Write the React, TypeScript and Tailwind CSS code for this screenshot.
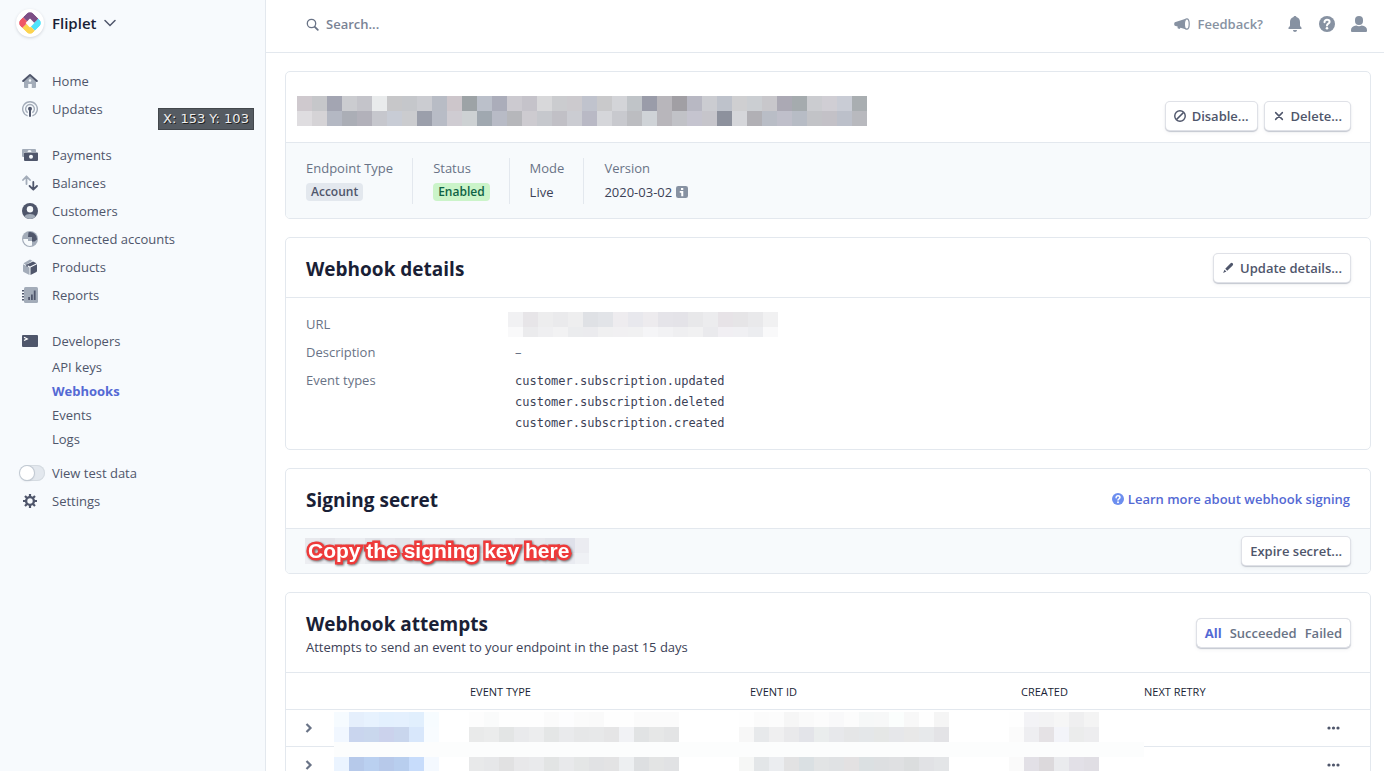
import React from "react";

const DARK = "#4f566b";
const LIGHT = "#a3acb9";

type Run = { at: number; colors: string };

/* A block of coloured squares that hides the text under it. */
function Mosaic({ rows, width, height, className = "" }: { rows: Run[][]; width: number; height: number; className?: string }) {
  return (
    <svg width={width} height={height} className={className} shapeRendering="crispEdges" aria-hidden="true">
      {rows.map((runs, r) =>
        runs.map((run) =>
          run.colors.split(" ").map((c, i) => (
            <rect key={`${r}-${run.at}-${i}`} x={(run.at + i) * 15} y={r * 15} width={15} height={15} fill={`#${c}`} />
          )),
        ),
      )}
    </svg>
  );
}

const titleRows: Run[][] = [
  [{ at: 0, colors: "cfc9ce c6c7ca a3a5b2 cbccd0 c4c4ca e9ebec c7c7c9 c5c7cb cbccd1 b8bcc5 cdc6cb 9da3a6 bbc0ca abadba cccad0 c5c3ca d8d8da cbcccf cccace c0c3cd c9c9cb d3d4d8 c0c4c8 9a9ca9 b8b6bb a19fa4 b8b8c3 cbccd1 bec2cb cfcfd1 cbced2 c8c7cb aba9b4 a5abae cbccd0 d0ced4 c9ccd5 a9aeb1" }],
  [{ at: 0, colors: "dfdde0 d5d3d6 b4b8c3 abaeb6 b2b1ba c6c7cd c8ccd5 cbcccf 9b9fab b8bcc6 cfccd2 cdd1d3 a0a8b0 b8bbc6 b6b7bb cdcbd0 c6c8cd c1c0c6 cbccd2 b9b9c5 d5d6da c8c9ce bcbdc1 cfd3d7 b8b6bb c1c2c7 c5c4cf c6c5cb 8d919d d5d6da b1b0b5 b9bdc6 bfbfca b7bcc5 c2c3c7 c3c1c7 bcc0ca b8b9be" }],
];
const urlRows: Run[][] = [
  [{ at: 0, colors: "f1f1f3 e7e5e8 ededee eaeaec eeeeef dfe1e5 e2e4e8 eeecef e8e8ed edebee e5e4e9 e4e3e8 e8e8ea ececee e7e3e7 e6e5e7 e9e9eb f1f1f2" }],
  [{ at: 0, colors: "f9f9fa ebebed efeff1 f2f2f3 ebecee ebebee f0f0f1 f1f0f2 f1f1f2 f5f5f7 f2f2f4 efeff1 f1f1f2 eaeaed f1eff3 f0f0f3 ecedf0 f9f9fa" }],
];
const secretRows: Run[][] = [
  [{ at: 0, colors: "e8e9ed e3e4e9 e8eaee ebedf1 e2e4e9 e6e7ec e3e4e9 e7e8ed e9eaee e4e5ea e6e8ec e3e4e9 e5e6eb e8e9ee e3e4ea e6e7ec e2e4ea dfe1ea ebecf1" }],
  [{ at: 0, colors: "edeef2 e9eaef ebecf0 edeff2 e8eaee eaebef eceef1 e9eaee ebedf0 edeef1 e9ebee ebecf0 edeff2 eaebef eceef2 edeff3 e9ebef e9ebf1 eff1f5" }],
];
const attemptRows: Run[][] = [
  [
    { at: 0, colors: "f6fbff e5effc e7f2fe e3f0fe e4f0fe e1effd f7fcff" },
    { at: 9, colors: "fdfdfd fafbfb fefefe fefefe fefefe fbfbfb fdfdfe fbfbfb fafafa fefefe fefefe fbfbfb fbfbfb fbfbfb" },
    { at: 27, colors: "fefefe fbfbfb fcfcfc f6f6f6 fafafa fcfcfc f9f9fa fcfcfc f6f8f8 f7f8f8 fbfefd f8f8f8 fefefe f5f5f5" },
    { at: 45, colors: "fefefe f3f3f6 f3f3f4 f6f6f6 efeff0 f4f4f4" },
  ],
  [
    { at: 0, colors: "f1f7ff c9d5ee c9d7ed cbd2ec c9d6ed d8e7fb f8fcff" },
    { at: 9, colors: "e9eaea ebecec e3e5e5 e9eaec ecedee e4e6e6 e9eaec e6e7e8 e7e8e9 e5e5e6 f1f2f5 e1e3e4 e6e7e7 e3e4e5" },
    { at: 27, colors: "f7f7f7 e7e9eb efeff0 e9e9eb e3e4e9 eaeded e7e8eb e5e6e7 e4e7e9 e5e7e6 e6e7ea e8e8e8 e7e9eb e3e3e6" },
    { at: 45, colors: "fbfbfb eeeef1 e5e2e5 f3f4f9 ebecec ededef" },
  ],
  [{ at: 0, colors: Array(54).fill("fcfdfd").join(" ") }],
  [
    { at: 0, colors: "ebf4ff b6c9ea bad0f0 b7c9ea b8ceee c7dcfb f4f9ff" },
    { at: 9, colors: "e8e9ea e6e7e9 e1e1e2 e8e8ea e9eaec e2e4e4 e8e9eb e4e6e6 e1e2e4 e3e3e4 edeff1 dddfe1 e3e4e4 e1e2e4" },
    { at: 27, colors: "f6f7f6 e3e6e8 ebedf0 e2e2e3 dae0e3 e2e4e5 e0e2e4 e3e1e2 dbe0e2 dddfe1 dfe0e2 dbddde e1e2e5 e3e5e7" },
    { at: 45, colors: "fafafa e2e0e6 dcd9dc eaebee e2e0e7 e0dee4" },
  ],
];

function Icon({ children, size = 16 }: { children: React.ReactNode; size?: number }) {
  return (
    <svg width={size} height={size} viewBox="0 0 16 16" className="shrink-0" aria-hidden="true">
      {children}
    </svg>
  );
}

const icons = {
  home: (
    <Icon>
      <path fill={LIGHT} fillRule="evenodd" d="M8 3.200l6 5V14a1 1 0 0 1-1 1H9.800v-4H6.200v4H3a1 1 0 0 1-1-1V8.200zM8 6.200a1.300 1.300 0 1 0 0 2.600 1.300 1.300 0 0 0 0-2.600z" />
      <path fill="none" stroke={DARK} strokeWidth="2" strokeLinecap="round" strokeLinejoin="round" d="M1.200 8L8 2l6.800 6" />
    </Icon>
  ),
  updates: (
    <Icon>
      <g fill="none" stroke={LIGHT} strokeWidth="1.400">
        <path d="M5.600 14.900a7.300 7.300 0 1 1 4.800 0" />
        <path d="M5.700 11.700a4.400 4.400 0 1 1 4.600 0" />
      </g>
      <circle cx="8" cy="7.700" r="2" fill={DARK} />
      <path stroke={DARK} strokeWidth="2" strokeLinecap="round" d="M8 8v7" />
    </Icon>
  ),
  payments: (
    <Icon>
      <path fill={LIGHT} d="M1 2h12a1 1 0 0 1 1 1v2H9.500a2 2 0 0 0-4 0H3a1 1 0 0 0-1 1v4H1a1 1 0 0 1-1-1V3a1 1 0 0 1 1-1z" />
      <path fill={DARK} fillRule="evenodd" d="M3 5.500h12a1 1 0 0 1 1 1V13a1 1 0 0 1-1 1H3a1 1 0 0 1-1-1V6.500a1 1 0 0 1 1-1zm6 2.200a2 2 0 1 0 0 4 2 2 0 0 0 0-4z" />
    </Icon>
  ),
  balances: (
    <Icon>
      <g fill="none" strokeWidth="1.800" strokeLinecap="round" strokeLinejoin="round">
        <path stroke={LIGHT} d="M4.500 9V1.500M1 5l3.500-3.700L8 5" />
        <path stroke={DARK} d="M11.300 7v7.500M7.600 11l3.700 3.700L15 11" />
      </g>
    </Icon>
  ),
  customers: (
    <Icon>
      <circle cx="8" cy="8" r="8" fill={DARK} />
      <circle cx="8" cy="6.300" r="3.200" fill="#f7fafc" />
      <path fill={LIGHT} d="M2.200 13.500C3.500 11.800 5.600 11 8 11s4.500.8 5.800 2.500A8 8 0 0 1 8 16a8 8 0 0 1-5.800-2.500z" />
    </Icon>
  ),
  connected: (
    <Icon>
      <circle cx="8" cy="8" r="8" fill={LIGHT} />
      <path fill={DARK} d="M6.500 1.200A7 7 0 0 1 15 8.500L12.500 10.500H10V6H6z" />
      <path fill="#f7fafc" d="M1.200 8H6v2h4v4.500C6 16 1.500 13 1.200 8z" />
    </Icon>
  ),
  products: (
    <Icon>
      <path fill={LIGHT} d="M7.500 16L1.600 13a1 1 0 0 1-.6-.9V5.200l6.500 3.200z" />
      <path fill={LIGHT} d="M1.500 4.200L8 .6l2.500 1.200-6 3.600v1.200z" />
      <path fill={DARK} d="M8.500 16l5.900-3a1 1 0 0 0 .6-.9V5.200L8.500 8.400z" />
      <path fill={DARK} d="M5.400 5.200l5.600-2.700L14.500 4.200 8 7.400 5.800 6.300V8L4.200 7.200V5.600z" />
    </Icon>
  ),
  reports: (
    <Icon>
      <rect x="2" width="14" height="16" rx="1.500" fill={LIGHT} />
      <path fill={DARK} d="M6.200 10h1.800v3H6.200zM9 7.500h1.800V13H9zM11.800 3.500h1.800V13h-1.800zM0 3h2v1.600H0zM0 6h2v1.600H0zM0 9h2v1.600H0zM0 12h2v1.600H0z" />
    </Icon>
  ),
  developers: (
    <Icon>
      <rect y="2" width="16" height="12" rx="1" fill={DARK} />
      <path fill="none" stroke="#fff" strokeWidth="1.200" d="M2 4.300l3.300 1.600L2 7.500" />
    </Icon>
  ),
  settings: (
    <Icon>
      <circle cx="8" cy="8" r="3.900" fill="none" stroke={DARK} strokeWidth="2.400" />
      <g stroke={DARK} strokeWidth="2.200">
        <path d="M8 1v3M8 12v3M1 8h3M12 8h3M3 3l2 2M11 11l2 2M13 3l-2 2M5 11l-2 2" />
      </g>
    </Icon>
  ),
};

function NavItem({ icon, label }: { icon: React.ReactNode; label: string }) {
  return (
    <a href="#" className="flex h-7 items-center gap-3.5 pl-[22px]">
      {icon}
      <span>{label}</span>
    </a>
  );
}

function Question({ size, fill }: { size: number; fill: string }) {
  return (
    <Icon size={size}>
      <circle cx="8" cy="8" r="8" fill={fill} />
      <path fill="none" stroke="#fff" strokeWidth="2" strokeLinecap="round" strokeLinejoin="round" d="M5.500 6.200C5.500 4.600 6.600 3.800 8 3.800s2.600.8 2.600 2.200C10.600 7.700 8 7.700 8 9.400" />
      <circle cx="8" cy="12.300" r="1.300" fill="#fff" />
    </Icon>
  );
}

function Button({ children, icon }: { children: React.ReactNode; icon?: React.ReactNode }) {
  return (
    <button className="flex h-7 items-center gap-1.5 rounded bg-white px-2 font-semibold whitespace-nowrap text-[#4f566b] shadow-[0_0_0_1px_#dfe1e7,0_1px_1px_1px_#c4c8d0,0_2px_5px_#3c425714]">
      {icon}
      {children}
    </button>
  );
}

function Card({ children }: { children: React.ReactNode }) {
  return <section className="overflow-hidden rounded-[5px] border border-[#e3e8ee] bg-white">{children}</section>;
}

function CardHeader({ title, children }: { title: string; children: React.ReactNode }) {
  return (
    <div className="flex h-[60px] items-center justify-between border-b border-[#e3e8ee] px-5">
      <h2 className="pt-0.5 text-[19px] leading-7 font-bold text-[#1a1f36]">{title}</h2>
      {children}
    </div>
  );
}

function Fact({ label, children, last }: { label: string; children: React.ReactNode; last?: boolean }) {
  return (
    <div className={last ? "flex flex-col" : "mr-5 flex flex-col border-r border-[#e3e8ee] pr-[19px]"}>
      <dt className="h-[22px] leading-5 text-[#697386]">{label}</dt>
      <dd className="flex h-6 items-center gap-1 text-[#3c4257]">{children}</dd>
    </div>
  );
}

function AttemptRow() {
  return (
    <tr className="h-[37px] border-b border-[#e3e8ee]">
      <td className="pl-[18px]">
        <button aria-label="Expand" className="flex">
          <svg width="10" height="12" viewBox="0 0 10 12" aria-hidden="true">
            <path d="M2.500 2l4 4-4 4" fill="none" stroke="#697386" strokeWidth="2.200" />
          </svg>
        </button>
      </td>
      <td /><td /><td /><td /><td />
      <td>
        <button aria-label="More" className="ml-auto mr-[30px] flex">
          <svg width="13" height="4" viewBox="0 0 13 4" fill="#4f566b" aria-hidden="true">
            <circle cx="2" cy="2" r="1.600" />
            <circle cx="6.500" cy="2" r="1.600" />
            <circle cx="11" cy="2" r="1.600" />
          </svg>
        </button>
      </td>
    </tr>
  );
}

export default function App() {
  return (
    <div className="flex h-screen overflow-hidden bg-white font-['Open_Sans','Noto_Sans',sans-serif] text-[13px] leading-5 text-[#3c4257]">
      <aside className="relative w-[266px] shrink-0 border-r border-[#e3e8ee] bg-[#f7fafd] text-[#4f566b]">
        <button className="mt-[9px] ml-4 flex h-7 items-center gap-2 text-[#1a1f36]">
          <span className="flex size-7 items-center justify-center rounded-full bg-white shadow-[0_1px_3px_#3c425733]">
            <svg width="24" height="24" viewBox="-12 -12 24 24" aria-hidden="true">
              <defs>
                <clipPath id="mark"><rect x="-9" y="-9" width="18" height="18" rx="4.500" /></clipPath>
              </defs>
              <g transform="rotate(45)">
                <g clipPath="url(#mark)">
                  <path fill="#7d4f86" d="M-9-9H3V0H0V1H-9z" />
                  <path fill="#4fe3fb" d="M3-9H9V2H0V0H3z" />
                  <path fill="#fcd34f" d="M9 2V9H-2V2z" />
                  <path fill="#ef5666" d="M-9 1H0V3H-2V9H-9z" />
                </g>
                <rect x="-3.200" y="-3.200" width="6.400" height="6.400" rx=".5" fill="#fff" />
              </g>
            </svg>
          </span>
          <span className="text-[15px] font-semibold">Fliplet</span>
          <svg width="12" height="8" viewBox="0 0 12 8" aria-hidden="true">
            <path d="M1 1.500l5 5 5-5" fill="none" stroke="#4f566b" strokeWidth="1.500" strokeLinecap="round" />
          </svg>
        </button>

        <nav className="mt-[30px]">
          <NavItem icon={icons.home} label="Home" />
          <NavItem icon={icons.updates} label="Updates" />
          <div className="mt-[18px]">
            <NavItem icon={icons.payments} label="Payments" />
            <NavItem icon={icons.balances} label="Balances" />
            <NavItem icon={icons.customers} label="Customers" />
            <NavItem icon={icons.connected} label="Connected accounts" />
            <NavItem icon={icons.products} label="Products" />
            <NavItem icon={icons.reports} label="Reports" />
          </div>
          <div className="mt-[18px]">
            <NavItem icon={icons.developers} label="Developers" />
            <div className="flex flex-col pl-[52px] leading-6">
              <a href="#">API keys</a>
              <a href="#" className="font-bold text-[#5469d4]">Webhooks</a>
              <a href="#">Events</a>
              <a href="#">Logs</a>
            </div>
          </div>
          <label className="mt-2 flex h-7 items-center gap-[7px] pl-5">
            <input type="checkbox" role="switch" className="peer sr-only" />
            <span className="flex h-4 w-[25px] items-center rounded-full bg-[#e3e8ee] shadow-[inset_0_0_0_1px_#d5dbe1]">
              <span className="size-3.5 rounded-full bg-white shadow-[0_0_0_1px_#c1c9d2,0_1px_2px_#3c425740]" />
            </span>
            View test data
          </label>
          <NavItem icon={icons.settings} label="Settings" />
        </nav>

        <div className="absolute top-[108px] left-[158px] flex h-[22px] items-center border border-[#43474c] bg-[#555b62] px-1 font-['DejaVu_Sans',sans-serif] text-[13px] whitespace-nowrap text-[#eeeeee] [text-shadow:1px_1px_0_#222]">
          X: 153 Y: 103
        </div>
      </aside>

      <div className="flex min-w-0 flex-1 flex-col">
        <header className="flex h-[53px] shrink-0 items-center justify-between border-b border-[#e3e8ee] pr-[17px] pb-1 pl-10">
          <label className="flex items-center gap-[7px]">
            <svg width="13" height="13" viewBox="0 0 13 13" aria-hidden="true">
              <circle cx="5.500" cy="5.500" r="4.200" fill="none" stroke="#697386" strokeWidth="1.300" />
              <path d="M8.800 8.800l3 3" stroke="#697386" strokeWidth="1.800" strokeLinecap="round" />
            </svg>
            <input type="text" aria-label="Search" placeholder="Search..." className="w-64 font-semibold outline-none placeholder:text-[#7a8395]" />
          </label>
          <div className="flex items-center gap-4 text-[#8792a2]">
            <a href="#" className="mr-2 flex items-center gap-2 font-semibold">
              <svg width="16" height="12" viewBox="0 0 16 12" aria-hidden="true">
                <path d="M.8 4.300L12.500.4v11.200L6.500 9.800 5.500 11 3.600 10.300V8.600L.8 7.700C0 7.300 0 4.700.8 4.300z" fill="#8792a2" />
                <ellipse cx="12.800" cy="6" rx="2.400" ry="5.200" fill="#fff" stroke="#8792a2" strokeWidth="1.200" />
              </svg>
              Feedback?
            </a>
            <button aria-label="Notifications">
              <Icon>
                <path fill="#8792a2" d="M8 0c.8 0 1.300.4 1.400 1C11.700 1.700 13 3.600 13 6v3.500c0 1 1.500 1.500 1.500 2.500v1h-13v-1c0-1 1.500-1.500 1.500-2.500V6c0-2.400 1.300-4.300 3.600-5C6.700.4 7.200 0 8 0zM6 14h4c0 1.200-.9 2-2 2s-2-.8-2-2z" />
              </Icon>
            </button>
            <button aria-label="Help"><Question size={16} fill="#8792a2" /></button>
            <button aria-label="Profile">
              <Icon>
                <rect x="4" width="8" height="9" rx="4" fill="#8792a2" />
                <path fill="#8792a2" d="M5.300 9.500C6.900 10.500 9.100 10.500 10.700 9.500 14 10 16 11.500 16 14v1a1 1 0 0 1-1 1H1a1 1 0 0 1-1-1v-1c0-2.500 2-4 5.300-4.500z" />
              </Icon>
            </button>
          </div>
        </header>

        <main className="flex flex-col gap-[18px] pt-[18px] pr-[13px] pl-[19px]">
          <Card>
            <div className="flex h-[71px] items-center justify-between border-b border-[#e3e8ee] pr-5 pl-[11px]">
              <Mosaic rows={titleRows} width={570} height={30} className="mt-2" />
              <div className="mt-[18px] flex gap-2">
                <Button icon={
                  <Icon size={12}>
                    <circle cx="8" cy="8" r="7" fill="none" stroke={DARK} strokeWidth="1.900" />
                    <path d="M3.500 12.500l9-9" stroke={DARK} strokeWidth="1.900" />
                  </Icon>
                }>Disable...</Button>
                <Button icon={
                  <Icon size={12}>
                    <path d="M3.500 3.500l9 9M12.500 3.500l-9 9" stroke={DARK} strokeWidth="2" strokeLinecap="round" />
                  </Icon>
                }>Delete...</Button>
              </div>
            </div>
            <dl className="flex bg-[#f7fafc] pt-[15px] pb-3.5 pl-5">
              <Fact label="Endpoint Type">
                <span className="rounded bg-[#e3e8ee] px-[5px] text-[12px] leading-[18px] font-semibold text-[#4f566b]">Account</span>
              </Fact>
              <Fact label="Status">
                <span className="rounded bg-[#cbf4c9] px-[5px] text-[12px] leading-[18px] font-semibold text-[#0e6245]">Enabled</span>
              </Fact>
              <Fact label="Mode">Live</Fact>
              <Fact label="Version" last>
                2020-03-02
                <Icon size={12}>
                  <rect width="16" height="16" rx="3" fill="#8792a2" />
                  <path fill="#fff" d="M6.700 2.500h3v2.700h-3zM5 6.700h4.700V13.500H7V9H5z" />
                </Icon>
              </Fact>
            </dl>
          </Card>

          <Card>
            <CardHeader title="Webhook details">
              <Button icon={
                <Icon size={12}>
                  <path fill={DARK} d="M11.500 1.800a1.800 1.800 0 0 1 2.700 2.700L7 11.700 4.300 9zM3.300 10.200L5.800 12.700 1.500 14.500z" />
                </Icon>
              }>Update details...</Button>
            </CardHeader>
            <dl className="grid grid-cols-[202px_1fr] pt-3 pb-[15px] pl-5 leading-7 text-[#697386]">
              <dt>URL</dt>
              <dd className="flex h-7 pt-0.5"><Mosaic rows={urlRows} width={270} height={25} /></dd>
              <dt>Description</dt>
              <dd className="pl-[7px]">–</dd>
              <dt>Event types</dt>
              <dd className="pt-[5px] pl-[7px] font-['DejaVu_Sans_Mono',monospace] text-[12px] leading-[21px] text-[#3c4257]">
                <div>customer.subscription.updated</div>
                <div>customer.subscription.deleted</div>
                <div>customer.subscription.created</div>
              </dd>
            </dl>
          </Card>

          <Card>
            <CardHeader title="Signing secret">
              <a href="#" className="flex items-center gap-1 font-semibold text-[#5469d4]">
                <Question size={12} fill="#6c8eef" />
                Learn more about webhook signing
              </a>
            </CardHeader>
            <div className="flex h-11 items-center justify-between bg-[#f7fafc] pr-5 pl-[19px]">
              <div className="relative">
                <Mosaic rows={secretRows} width={284} height={26} />
                <span className="absolute top-0 left-[3px] font-['Liberation_Sans',sans-serif] text-[21px] leading-[26px] font-bold whitespace-nowrap text-white [-webkit-text-stroke:5px_#ee3a3a] [paint-order:stroke_fill] drop-shadow-[1px_1px_1px_#0008]">
                  Copy the signing key here
                </span>
              </div>
              <Button>Expire secret...</Button>
            </div>
          </Card>

          <Card>
            <div className="flex h-20 items-center justify-between border-b border-[#e3e8ee] px-5">
              <div className="pt-0.5">
                <h2 className="text-[19px] leading-[26px] font-bold text-[#1a1f36]">Webhook attempts</h2>
                <p>Attempts to send an event to your endpoint in the past 15 days</p>
              </div>
              <div className="flex h-7 items-center gap-2 rounded px-2 font-semibold text-[#697386] shadow-[0_0_0_1px_#dfe1e7,0_1px_1px_1px_#c4c8d0,0_2px_5px_#3c425714]">
                <button className="font-bold text-[#5469d4]">All</button>
                <button>Succeeded</button>
                <button>Failed</button>
              </div>
            </div>
            <div className="relative">
              <table className="w-full table-fixed border-collapse text-left">
                <thead>
                  <tr className="h-9 border-b border-[#e3e8ee] text-[11px] text-[#1a1f36] [&>th]:pt-0.5 [&>th]:font-normal">
                    <th className="w-12" />
                    <th className="w-[136px]" />
                    <th className="w-[280px]">EVENT TYPE</th>
                    <th className="w-[271px]">EVENT ID</th>
                    <th className="w-[123px]">CREATED</th>
                    <th className="w-[120px]">NEXT RETRY</th>
                    <th />
                  </tr>
                </thead>
                <tbody>
                  <AttemptRow />
                  <AttemptRow />
                </tbody>
              </table>
              <Mosaic rows={attemptRows} width={810} height={60} className="absolute top-[39px] left-12" />
            </div>
          </Card>
        </main>
      </div>
    </div>
  );
}
